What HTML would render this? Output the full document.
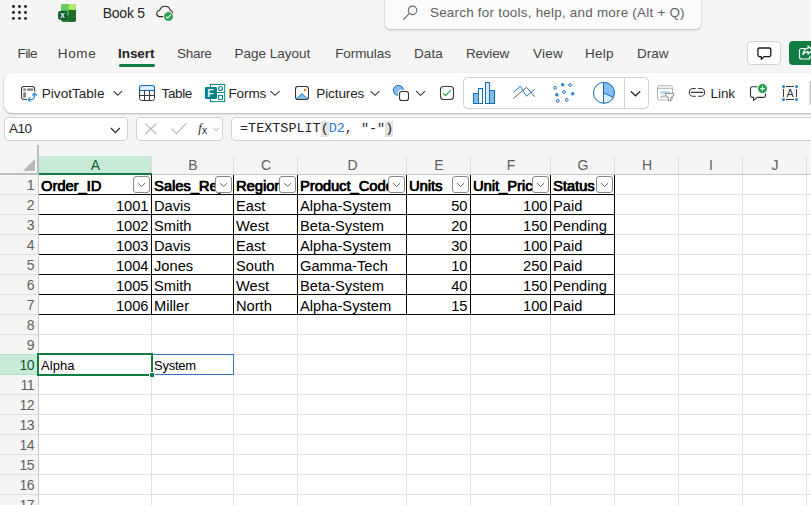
<!DOCTYPE html>
<html>
<head>
<meta charset="utf-8">
<title>Book 5</title>
<style>
html,body{margin:0;padding:0;}
body{width:811px;height:505px;overflow:hidden;background:#f5f5f5;font-family:"Liberation Sans",sans-serif;position:relative;color:#242424;}
.abs{position:absolute;}
.t{position:absolute;white-space:pre;line-height:1;}
.ui{font-size:13.5px;color:#424242;}
/* title */
#search{left:385px;top:-6px;width:316px;height:34.5px;background:#fbfbfb;border-radius:5px;box-shadow:0 1px 2px rgba(0,0,0,.22),0 0 2px rgba(0,0,0,.10);}
/* ribbon */
#ribbon{left:4px;top:73px;width:830px;height:40px;background:#fff;border-radius:8px;box-shadow:0 1px 2px rgba(0,0,0,.26),0 0 1px rgba(0,0,0,.14);}
.rb{font-size:13.5px;color:#242424;}
.fbox{position:absolute;top:117px;height:24px;background:#fff;border:1px solid #d1d1d1;border-radius:4px;box-sizing:border-box;}
/* grid */
#grid{left:0;top:145px;width:811px;height:360px;}
.cell{position:absolute;white-space:pre;font-size:14.67px;line-height:19px;height:18px;color:#000;overflow:hidden;}
.b{font-weight:400;-webkit-text-stroke:0.55px #000;text-shadow:0.35px 0 0 #000;}
.r{text-align:right;}
.rh{position:absolute;left:0;width:34px;letter-spacing:-0.5px;text-align:right;font-size:14px;margin-top:1px;line-height:19px;color:#616161;}
.ch{position:absolute;top:156px;height:17px;line-height:18px;text-align:center;font-size:14px;padding-left:0.5px;color:#616161;}
.fb{position:absolute;width:15px;height:15px;border:1px solid #8a8a8a;border-radius:3px;background:#fff;}
</style>
</head>
<body>

<!-- ===== title bar ===== -->
<svg class="abs" style="left:10px;top:3px" width="20" height="20" viewBox="10 3 20 20">
 <g fill="#1f1f1f">
  <circle cx="13.400" cy="6.500" r="1.450"/><circle cx="19.450" cy="6.500" r="1.450"/><circle cx="25.500" cy="6.500" r="1.450"/>
  <circle cx="13.400" cy="12.450" r="1.450"/><circle cx="19.450" cy="12.450" r="1.450"/><circle cx="25.500" cy="12.450" r="1.450"/>
  <circle cx="13.400" cy="18.400" r="1.450"/><circle cx="19.450" cy="18.400" r="1.450"/><circle cx="25.500" cy="18.400" r="1.450"/>
 </g>
</svg>

<svg class="abs" style="left:52px;top:0px" width="30" height="26" viewBox="52 0 30 26">
 <clipPath id="xc"><rect x="61" y="3.900" width="15.100" height="18" rx="2.700"/></clipPath>
 <g clip-path="url(#xc)">
  <rect x="61" y="3.900" width="15.100" height="18" fill="#1f7a2b"/>
  <rect x="68.900" y="9.900" width="7.200" height="12" fill="#236b28"/>
  <path d="M61 9.900H68.900V13.500A2.500 2.500 0 0 1 66.400 16H61Z" fill="#43ab49"/>
  <rect x="61" y="3.900" width="7.500" height="6.100" fill="#66cf5c"/>
  <rect x="68.400" y="3.900" width="7.700" height="6" fill="#b4e86e"/>
 </g>
 <rect x="58.100" y="11.100" width="8.800" height="8.700" rx="2" fill="#0f5b32"/>
 <text x="62.500" y="17.900" font-family="Liberation Sans, sans-serif" font-weight="700" font-size="6.800" text-anchor="middle" fill="#fff">X</text>
</svg>

<div class="t" style="left:102.70px;top:6px;font-size:14px;color:#242424;letter-spacing:-0.240px">Book 5</div>

<svg class="abs" style="left:150px;top:0px" width="30" height="26" viewBox="150 0 30 26">
 <path d="M163 16.600H160A3.100 3.100 0 0 1 159.700 10.400C160.300 7.900 162.500 6.200 165.100 6.200C167.800 6.200 169.700 8 170.300 10.300C171.400 10.500 172.300 11.400 172.700 12.700" fill="none" stroke="#2b2b2b" stroke-width="1.050" stroke-linecap="round"/>
 <circle cx="168.500" cy="16.600" r="5.100" fill="#f5f5f5"/>
 <circle cx="168.500" cy="16.600" r="4.500" fill="#2fa44f"/>
 <path d="M166.500 16.900L167.800 18.200L170.600 15" fill="none" stroke="#fff" stroke-width="1.100" stroke-linecap="round" stroke-linejoin="round"/>
</svg>

<div id="search" class="abs"></div>
<svg class="abs" style="left:400px;top:3px" width="20" height="20" viewBox="400 3 20 20">
 <circle cx="412.550" cy="10.350" r="4.250" fill="none" stroke="#616161" stroke-width="1.050"/>
 <path d="M409.500 13.400L403.500 19.300" stroke="#616161" stroke-width="1.100" stroke-linecap="round"/>
</svg>
<div class="t" style="left:430px;top:6px;font-size:13.4px;color:#616161;letter-spacing:0.245px">Search for tools, help, and more (Alt + Q)</div>

<!-- ===== tabs ===== -->
<div class="t ui" style="left:17.6px;top:46.6px;letter-spacing:-0.64px">File</div>
<div class="t ui" style="left:57.70px;top:46.6px;letter-spacing:0.700px">Home</div>
<div class="t ui" style="left:118.10px;top:46.6px;font-weight:700;color:#242424;letter-spacing:-0.080px">Insert</div>
<div class="abs" style="left:118.500px;top:64px;width:36px;height:3px;border-radius:1.500px;background:#107c41"></div>
<div class="t ui" style="left:177.10px;top:46.6px;letter-spacing:-0.310px">Share</div>
<div class="t ui" style="left:234.60px;top:46.6px;letter-spacing:-0.010px">Page Layout</div>
<div class="t ui" style="left:335.20px;top:46.6px;letter-spacing:-0.080px">Formulas</div>
<div class="t ui" style="left:414.00px;top:46.6px;letter-spacing:0.113px">Data</div>
<div class="t ui" style="left:465.90px;top:46.6px;letter-spacing:-0.184px">Review</div>
<div class="t ui" style="left:533px;top:46.6px;letter-spacing:0.267px">View</div>
<div class="t ui" style="left:585.00px;top:46.6px;letter-spacing:0.233px">Help</div>
<div class="t ui" style="left:636.90px;top:46.6px;letter-spacing:0.033px">Draw</div>

<div class="abs" style="left:747px;top:41px;width:34px;height:23.500px;box-sizing:border-box;background:#fff;border:1px solid #d1d1d1;border-radius:4px"></div>
<svg class="abs" style="left:750px;top:42px" width="28" height="22" viewBox="750 42 28 22">
 <path d="M759.500 48H769.200A1.600 1.600 0 0 1 770.800 49.600V55A1.600 1.600 0 0 1 769.200 56.600H764.300L761.300 59.300V56.600H759.500A1.600 1.600 0 0 1 757.900 55V49.600A1.600 1.600 0 0 1 759.500 48Z" fill="none" stroke="#1a1a1a" stroke-width="1.300" stroke-linejoin="round"/>
</svg>
<div class="abs" style="left:789px;top:41px;width:40px;height:23.500px;background:#107c41;border-radius:4px"></div>
<svg class="abs" style="left:797px;top:43.500px" width="16" height="17" viewBox="0 0 16 17">
 <path d="M8 4.500H4.500A2 2 0 0 0 2.500 6.500V13A2 2 0 0 0 4.500 15H11A2 2 0 0 0 13 13V12" fill="none" stroke="#fff" stroke-width="1.200" stroke-linecap="round"/>
 <path d="M11 2L15.500 6L11 10V7.600C8.500 7.600 7 8.500 6 10.500C6 7 8 4.800 11 4.500Z" fill="none" stroke="#fff" stroke-width="1.200" stroke-linejoin="round"/>
</svg>

<!-- ===== ribbon ===== -->
<div id="ribbon" class="abs"></div>
<!--RIBBON-START-->
<svg class="abs" style="left:0;top:73px" width="811" height="40" viewBox="0 73 811 40">
 <!-- pivot table icon -->
 <path d="M27 99.500H24A2.500 2.500 0 0 1 21.500 97V89A2.500 2.500 0 0 1 24 86.500H32.100A2.500 2.500 0 0 1 34.600 89V91.600" fill="none" stroke="#3a3a3a" stroke-width="1.100"/>
 <rect x="23.300" y="88.400" width="2.500" height="2.400" rx="0.400" fill="#7a7a7a"/>
 <rect x="27.200" y="88.400" width="5.800" height="2.400" rx="0.400" fill="#7a7a7a"/>
 <rect x="23.300" y="92.200" width="2.500" height="5.600" rx="0.400" fill="#7a7a7a"/>
 <path d="M28.300 99.600H30.800A3.700 3.700 0 0 0 34.500 95.900V93.400" fill="none" stroke="#1a86d9" stroke-width="1.150"/>
 <path d="M30.400 97.400L28.200 99.600L30.400 101.800M32.300 95.500L34.500 93.300L36.700 95.500" fill="none" stroke="#1a86d9" stroke-width="1.150"/>
 <!-- chevron pivot -->
 <path d="M113.600 91.200L117.800 95.300L122 91.200" fill="none" stroke="#333" stroke-width="1.100"/>
 <!-- table icon -->
 <path d="M139.500 90.500V87.500A2 2 0 0 1 141.500 85.500H152.500A2 2 0 0 1 154.500 87.500V90.500Z" fill="#deecf9" stroke="#0f6cbd" stroke-width="1.200"/>
 <path d="M139.500 90.500V98.300A2.200 2.200 0 0 0 141.700 100.500H152.300A2.200 2.200 0 0 0 154.500 98.300V90.500M139.500 95.500H154.500M144.500 90.500V100.500M149.500 90.500V100.500" fill="none" stroke="#3a3a3a" stroke-width="1"/>
 <!-- forms icon -->
 <rect x="210.400" y="84.400" width="14.300" height="17.200" fill="#fff" stroke="#038387" stroke-width="1"/>
 <path d="M216.500 92.500H224.500" stroke="#038387" stroke-width="1"/>
 <rect x="205" y="87" width="12" height="12" rx="1.300" fill="#038387"/>
 <circle cx="220.500" cy="88.500" r="2" fill="#fff" stroke="#038387" stroke-width="1.100"/>
 <rect x="218.500" y="95.400" width="4" height="4" fill="#fff" stroke="#038387" stroke-width="1"/>
 <!-- chevron forms -->
 <path d="M270.400 91.200L275 95.300L279.600 91.200" fill="none" stroke="#333" stroke-width="1.100"/>
 <!-- pictures icon -->
 <path d="M296.300 99.300L302 93.600L307.700 99.300Z" fill="#83beec"/><path d="M296.300 99.200L302 93.500L307.700 99.200" fill="none" stroke="#0f6cbd" stroke-width="1" stroke-linejoin="round"/>
 <rect x="295.500" y="86.500" width="13" height="13" rx="2.500" fill="none" stroke="#333" stroke-width="1.100"/>
 <rect x="304" y="89" width="2.100" height="2.100" fill="#e8740c"/>
 <!-- chevron pictures -->
 <path d="M370.600 91.200L375 95.300L379.400 91.200" fill="none" stroke="#333" stroke-width="1.100"/>
 <!-- shapes icon -->
 <circle cx="398.400" cy="90.400" r="5" fill="#83beec" stroke="#0f6cbd" stroke-width="1"/>
 <rect x="398" y="90" width="12" height="12" rx="3" fill="#fff"/>
 <rect x="399.500" y="91.500" width="9" height="9" rx="2.300" fill="#fff" stroke="#333" stroke-width="1.100"/>
 <path d="M416 91.200L420.500 95.300L425 91.200" fill="none" stroke="#333" stroke-width="1.100"/>
 <!-- checkbox icon -->
 <rect x="440.500" y="86.500" width="13" height="13" rx="3" fill="#fff" stroke="#3b3b3b" stroke-width="1.100"/>
 <path d="M443 93.300L445.500 95.500L450.900 90.200" fill="none" stroke="#21a04a" stroke-width="1.100"/>
 <!-- chart gallery box -->
 <rect x="463.500" y="77.500" width="185" height="31" rx="4" fill="#fff" stroke="#d1d1d1" stroke-width="1"/>
 <path d="M624.500 78V108" stroke="#d1d1d1" stroke-width="1"/>
 <!-- bar chart -->
 <rect x="473.500" y="93.500" width="5" height="10" fill="#83beec" stroke="#0f6cbd"/>
 <rect x="478.500" y="88.500" width="4" height="15" fill="#fff" stroke="#0f6cbd"/>
 <rect x="485.500" y="82.500" width="4" height="21" fill="#deecf9" stroke="#0f6cbd"/>
 <rect x="489.500" y="90.500" width="5" height="13" fill="#83beec" stroke="#0f6cbd"/>
 <!-- line chart -->
 <path d="M513.400 98.500L526.500 87.300L534.600 96.700" fill="none" stroke="#616161" stroke-width="1"/>
 <path d="M513.400 92.200L520.300 86.300L526.500 96.200L534.600 89.300" fill="none" stroke="#1e7fd0" stroke-width="1"/>
 <!-- scatter -->
 <g fill="#1e88d8"><circle cx="562.700" cy="84.700" r="1.700"/><circle cx="556.800" cy="94.700" r="1.700"/><circle cx="572.700" cy="93.700" r="1.700"/></g>
 <g fill="#fff" stroke="#0f6cbd" stroke-width="0.900"><circle cx="555.100" cy="87.800" r="1.400"/><circle cx="570.100" cy="85" r="1.400"/><circle cx="564" cy="92" r="1.400"/><circle cx="557.800" cy="100.900" r="1.400"/><circle cx="566.800" cy="99.800" r="1.400"/></g>
 <!-- pie -->
 <circle cx="604" cy="92.800" r="10.500" fill="#fff"/>
 <path d="M603.500 92.800V82.300A10.500 10.500 0 0 1 613.400 97.500Z" fill="#83beec"/>
 <path d="M603.500 92.800L613.400 97.500A10.500 10.500 0 0 1 603.500 103.300Z" fill="#deecf9"/>
 <circle cx="604" cy="92.800" r="10.500" fill="none" stroke="#0f6cbd" stroke-width="1"/>
 <path d="M603.500 82.300V103.300M603.500 92.800L613.400 97.500" fill="none" stroke="#0f6cbd" stroke-width="1"/>
 <!-- gallery chevron -->
 <path d="M630.800 91.200L635.500 95.800L640.200 91.200" fill="none" stroke="#242424" stroke-width="1.200"/>
 <!-- slicer (disabled) -->
 <rect x="657.500" y="85.700" width="15" height="14.300" rx="2" fill="#fff" stroke="#b0b0b0" stroke-width="1"/>
 <path d="M657.500 88.300H672.500" stroke="#b0b0b0" stroke-width="1"/>
 <rect x="660.500" y="91.300" width="9.500" height="2.400" fill="#a9d3f2"/>
 <rect x="660.500" y="95.500" width="5" height="2.200" fill="#c4c4c4"/>
 <path d="M665.500 93.500H673.700V95.200L670.800 98V100.800H668.400V98L665.500 95.200Z" fill="#fff" stroke="#969696" stroke-width="1.100" stroke-linejoin="round"/>
 <!-- link icon -->
 <path d="M695.400 88.500H693.200A3.900 3.900 0 0 0 693.200 96.300H695.400M698.600 88.500H700.800A3.900 3.900 0 0 1 700.800 96.300H698.600M691.300 92.400H702.700" fill="none" stroke="#3a3a3a" stroke-width="1.100" stroke-linecap="round"/>
 <!-- new comment icon -->
 <path d="M757.500 86.700H752.300A1.800 1.800 0 0 0 750.500 88.500V95.600A1.800 1.800 0 0 0 752.300 97.400H753.600V100.400L757.300 97.400H763.700A1.800 1.800 0 0 0 765.500 95.600V93.500" fill="none" stroke="#333" stroke-width="1.100" stroke-linejoin="round"/>
 <circle cx="762.500" cy="88.600" r="4.500" fill="#21a04a"/>
 <path d="M760.200 88.600H764.800M762.500 86.300V90.900" stroke="#fff" stroke-width="1.100"/>
 <!-- text box icon -->
 <path d="M786 86.500H794M786 99.500H794M783.500 89V97M796.500 89V97" stroke="#3a3a3a" stroke-width="1"/>
 <g fill="#1e88d8"><circle cx="783.500" cy="86.500" r="1.500"/><circle cx="796.500" cy="86.500" r="1.500"/><circle cx="783.500" cy="99.500" r="1.500"/><circle cx="796.500" cy="99.500" r="1.500"/></g>
 <text x="790" y="96.800" font-family="Liberation Sans, sans-serif" font-size="10.800" text-anchor="middle" fill="#333">A</text>
 <text x="210.450" y="96.900" font-family="Liberation Sans, sans-serif" font-size="10.500" font-weight="700" text-anchor="middle" fill="#eaf6f6">F</text>
 <rect x="809.500" y="81" width="2" height="23.500" fill="#c6c6c6"/>
</svg>
<div class="t rb" style="left:41.80px;top:86.5px;letter-spacing:0.037px">PivotTable</div>
<div class="t rb" style="left:161.5px;top:86.5px;letter-spacing:-0.36px">Table</div>
<div class="t rb" style="left:228.50px;top:86.5px;letter-spacing:-0.125px">Forms</div>
<div class="t rb" style="left:316.30px;top:86.5px;letter-spacing:-0.103px">Pictures</div>
<div class="t rb" style="left:710.60px;top:86.5px;letter-spacing:-0.083px">Link</div>
<!--RIBBON-END-->

<!-- ===== formula bar ===== -->
<div class="fbox" style="left:4px;width:124px"></div>
<div class="fbox" style="left:136px;width:87px"></div>
<div class="fbox" style="left:231px;width:600px"></div>
<div class="t" style="left:8.9px;top:122.400px;font-size:13.500px;color:#242424;letter-spacing:-0.45px">A10</div>
<svg class="abs" style="left:100px;top:117px" width="130" height="24" viewBox="100 117 130 24">
 <path d="M111 128L115.400 132.600L119.800 128" fill="none" stroke="#242424" stroke-width="1.150"/>
 <path d="M145.200 123.400L156.500 134.200M156.500 123.400L145.200 134.200" fill="none" stroke="#b8b8b8" stroke-width="1.200"/>
 <path d="M171.500 128.600L176.400 133.600L186.200 123.300" fill="none" stroke="#b8b8b8" stroke-width="1.200"/>
 <path d="M213.600 128L216.200 130.500L218.800 128" fill="none" stroke="#9e9e9e" stroke-width="1"/>
 <text x="198.300" y="131.500" font-family="Liberation Serif, serif" font-style="italic" font-size="12.500" fill="#2b2b2b">f</text>
 <text x="201.900" y="134" font-family="Liberation Sans, sans-serif" font-size="10.300" fill="#2b2b2b">x</text>
</svg>
<div class="abs" style="left:320.500px;top:121px;width:8px;height:16px;background:#e3e3e3"></div>
<div class="abs" style="left:385px;top:121px;width:8px;height:16px;background:#e3e3e3"></div>
<div class="t" style="left:240px;top:122px;font-family:'Liberation Mono',monospace;font-size:13.450px;color:#242424">=TEXTSPLIT(<span style="color:#2b7cd3">D2</span>, "-")</div>

<!-- ===== grid ===== -->
<!--GRID-START-->
<div class="abs" style="left:39px;top:175px;width:772px;height:330px;background:#fff"></div>
<div class="abs" style="left:39px;top:156px;width:113px;height:17px;background:#caead8"></div>
<svg class="abs" style="left:0;top:145px" width="811" height="360" viewBox="0 145 811 360" shape-rendering="crispEdges">
<rect x="39" y="194" width="772" height="1" fill="#e1e1e1"/>
<rect x="39" y="214" width="772" height="1" fill="#e1e1e1"/>
<rect x="39" y="234" width="772" height="1" fill="#e1e1e1"/>
<rect x="39" y="254" width="772" height="1" fill="#e1e1e1"/>
<rect x="39" y="274" width="772" height="1" fill="#e1e1e1"/>
<rect x="39" y="294" width="772" height="1" fill="#e1e1e1"/>
<rect x="39" y="314" width="772" height="1" fill="#e1e1e1"/>
<rect x="39" y="334" width="772" height="1" fill="#e1e1e1"/>
<rect x="39" y="354" width="772" height="1" fill="#e1e1e1"/>
<rect x="39" y="374" width="772" height="1" fill="#e1e1e1"/>
<rect x="39" y="394" width="772" height="1" fill="#e1e1e1"/>
<rect x="39" y="414" width="772" height="1" fill="#e1e1e1"/>
<rect x="39" y="434" width="772" height="1" fill="#e1e1e1"/>
<rect x="39" y="454" width="772" height="1" fill="#e1e1e1"/>
<rect x="39" y="474" width="772" height="1" fill="#e1e1e1"/>
<rect x="39" y="494" width="772" height="1" fill="#e1e1e1"/>
<rect x="39" y="514" width="772" height="1" fill="#e1e1e1"/>
<rect x="151" y="175" width="1" height="330" fill="#e1e1e1"/>
<rect x="233" y="175" width="1" height="330" fill="#e1e1e1"/>
<rect x="297" y="175" width="1" height="330" fill="#e1e1e1"/>
<rect x="406" y="175" width="1" height="330" fill="#e1e1e1"/>
<rect x="470" y="175" width="1" height="330" fill="#e1e1e1"/>
<rect x="550" y="175" width="1" height="330" fill="#e1e1e1"/>
<rect x="614" y="175" width="1" height="330" fill="#e1e1e1"/>
<rect x="678" y="175" width="1" height="330" fill="#e1e1e1"/>
<rect x="742" y="175" width="1" height="330" fill="#e1e1e1"/>
<rect x="806" y="175" width="1" height="330" fill="#e1e1e1"/>
<rect x="0" y="194" width="38" height="1" fill="#dddddd"/>
<rect x="0" y="214" width="38" height="1" fill="#dddddd"/>
<rect x="0" y="234" width="38" height="1" fill="#dddddd"/>
<rect x="0" y="254" width="38" height="1" fill="#dddddd"/>
<rect x="0" y="274" width="38" height="1" fill="#dddddd"/>
<rect x="0" y="294" width="38" height="1" fill="#dddddd"/>
<rect x="0" y="314" width="38" height="1" fill="#dddddd"/>
<rect x="0" y="334" width="38" height="1" fill="#dddddd"/>
<rect x="0" y="354" width="38" height="1" fill="#dddddd"/>
<rect x="0" y="374" width="38" height="1" fill="#dddddd"/>
<rect x="0" y="394" width="38" height="1" fill="#dddddd"/>
<rect x="0" y="414" width="38" height="1" fill="#dddddd"/>
<rect x="0" y="434" width="38" height="1" fill="#dddddd"/>
<rect x="0" y="454" width="38" height="1" fill="#dddddd"/>
<rect x="0" y="474" width="38" height="1" fill="#dddddd"/>
<rect x="0" y="494" width="38" height="1" fill="#dddddd"/>
<rect x="0" y="514" width="38" height="1" fill="#dddddd"/>
<rect x="151" y="156" width="1" height="18" fill="#dddddd"/>
<rect x="233" y="156" width="1" height="18" fill="#dddddd"/>
<rect x="297" y="156" width="1" height="18" fill="#dddddd"/>
<rect x="406" y="156" width="1" height="18" fill="#dddddd"/>
<rect x="470" y="156" width="1" height="18" fill="#dddddd"/>
<rect x="550" y="156" width="1" height="18" fill="#dddddd"/>
<rect x="614" y="156" width="1" height="18" fill="#dddddd"/>
<rect x="678" y="156" width="1" height="18" fill="#dddddd"/>
<rect x="742" y="156" width="1" height="18" fill="#dddddd"/>
<rect x="806" y="156" width="1" height="18" fill="#dddddd"/>
<rect x="39" y="174" width="772" height="1" fill="#c6c6c6"/>
<rect x="0" y="173" width="39" height="2" fill="#bdbdbd"/>
<rect x="37" y="145" width="2" height="30" fill="#bdbdbd"/>
<rect x="38" y="175" width="1" height="330" fill="#c8c8c8"/>
<rect x="39" y="173" width="113" height="2" fill="#107c41"/>
<rect x="0" y="354" width="37" height="21" fill="#caead8"/>
<rect x="0" y="354" width="37" height="1" fill="#b4dfc6"/>
<rect x="0" y="374" width="37" height="1" fill="#b4dfc6"/>
<rect x="37" y="355" width="2" height="19" fill="#107c41"/>
<path d="M35 159V171H23Z" fill="#b9b9b9" shape-rendering="auto"/>
<rect x="39" y="194" width="576" height="1" fill="#000"/>
<rect x="39" y="214" width="576" height="1" fill="#000"/>
<rect x="39" y="234" width="576" height="1" fill="#000"/>
<rect x="39" y="254" width="576" height="1" fill="#000"/>
<rect x="39" y="274" width="576" height="1" fill="#000"/>
<rect x="39" y="294" width="576" height="1" fill="#000"/>
<rect x="39" y="314" width="576" height="1" fill="#000"/>
<rect x="151" y="175" width="1" height="140" fill="#000"/>
<rect x="233" y="175" width="1" height="140" fill="#000"/>
<rect x="297" y="175" width="1" height="140" fill="#000"/>
<rect x="406" y="175" width="1" height="140" fill="#000"/>
<rect x="470" y="175" width="1" height="140" fill="#000"/>
<rect x="550" y="175" width="1" height="140" fill="#000"/>
<rect x="614" y="175" width="1" height="140" fill="#000"/>
<rect x="152.5" y="354.5" width="81" height="20" fill="none" stroke="#3f6fc4" stroke-width="1"/>
<rect x="38" y="354" width="114" height="21" fill="none" stroke="#107c41" stroke-width="2"/>
<rect x="149" y="372" width="6" height="6" fill="#fff"/>
<rect x="150" y="373" width="4" height="4" fill="#107c41"/>
</svg>
<div class="ch" style="left:39px;width:112px;color:#0e5c2f">A</div>
<div class="ch" style="left:152px;width:81px;color:#616161">B</div>
<div class="ch" style="left:234px;width:63px;color:#616161">C</div>
<div class="ch" style="left:298px;width:108px;color:#616161">D</div>
<div class="ch" style="left:407px;width:63px;color:#616161">E</div>
<div class="ch" style="left:471px;width:79px;color:#616161">F</div>
<div class="ch" style="left:551px;width:63px;color:#616161">G</div>
<div class="ch" style="left:615px;width:63px;color:#616161">H</div>
<div class="ch" style="left:679px;width:63px;color:#616161">I</div>
<div class="ch" style="left:743px;width:63px;color:#616161">J</div>
<div class="rh" style="top:175px;color:#616161">1</div>
<div class="rh" style="top:195px;color:#616161">2</div>
<div class="rh" style="top:215px;color:#616161">3</div>
<div class="rh" style="top:235px;color:#616161">4</div>
<div class="rh" style="top:255px;color:#616161">5</div>
<div class="rh" style="top:275px;color:#616161">6</div>
<div class="rh" style="top:295px;color:#616161">7</div>
<div class="rh" style="top:315px;color:#616161">8</div>
<div class="rh" style="top:335px;color:#616161">9</div>
<div class="rh" style="top:355px;color:#0e5c2f">10</div>
<div class="rh" style="top:375px;color:#616161">11</div>
<div class="rh" style="top:395px;color:#616161">12</div>
<div class="rh" style="top:415px;color:#616161">13</div>
<div class="rh" style="top:435px;color:#616161">14</div>
<div class="rh" style="top:455px;color:#616161">15</div>
<div class="rh" style="top:475px;color:#616161">16</div>
<div class="rh" style="top:495px;color:#616161">17</div>
<div class="cell b" style="left:41px;top:177px;width:110px;height:18px">Order_ID</div>
<div class="fb" style="left:133px;top:176px"></div>
<svg class="abs" style="left:137px;top:182px" width="9" height="6" viewBox="0 0 9 6"><path d="M1 1.200L4.500 4.500L8 1.200" fill="none" stroke="#666" stroke-width="1"/></svg>
<div class="cell b" style="left:154px;top:177px;width:79px;height:18px">Sales_Rep</div>
<div class="fb" style="left:215px;top:176px"></div>
<svg class="abs" style="left:219px;top:182px" width="9" height="6" viewBox="0 0 9 6"><path d="M1 1.200L4.500 4.500L8 1.200" fill="none" stroke="#666" stroke-width="1"/></svg>
<div class="cell b" style="left:236px;top:177px;width:61px;height:18px">Region</div>
<div class="fb" style="left:279px;top:176px"></div>
<svg class="abs" style="left:283px;top:182px" width="9" height="6" viewBox="0 0 9 6"><path d="M1 1.200L4.500 4.500L8 1.200" fill="none" stroke="#666" stroke-width="1"/></svg>
<div class="cell b" style="left:300px;top:177px;width:106px;height:18px">Product_Code</div>
<div class="fb" style="left:388px;top:176px"></div>
<svg class="abs" style="left:392px;top:182px" width="9" height="6" viewBox="0 0 9 6"><path d="M1 1.200L4.500 4.500L8 1.200" fill="none" stroke="#666" stroke-width="1"/></svg>
<div class="cell b" style="left:409px;top:177px;width:61px;height:18px">Units</div>
<div class="fb" style="left:452px;top:176px"></div>
<svg class="abs" style="left:456px;top:182px" width="9" height="6" viewBox="0 0 9 6"><path d="M1 1.200L4.500 4.500L8 1.200" fill="none" stroke="#666" stroke-width="1"/></svg>
<div class="cell b" style="left:473px;top:177px;width:77px;height:18px">Unit_Price</div>
<div class="fb" style="left:532px;top:176px"></div>
<svg class="abs" style="left:536px;top:182px" width="9" height="6" viewBox="0 0 9 6"><path d="M1 1.200L4.500 4.500L8 1.200" fill="none" stroke="#666" stroke-width="1"/></svg>
<div class="cell b" style="left:553px;top:177px;width:61px;height:18px">Status</div>
<div class="fb" style="left:596px;top:176px"></div>
<svg class="abs" style="left:600px;top:182px" width="9" height="6" viewBox="0 0 9 6"><path d="M1 1.200L4.500 4.500L8 1.200" fill="none" stroke="#666" stroke-width="1"/></svg>
<div class="cell r" style="left:39px;top:197px;width:109.5px">1001</div>
<div class="cell" style="left:154px;top:197px;width:79px">Davis</div>
<div class="cell" style="left:236px;top:197px;width:61px">East</div>
<div class="cell" style="left:300px;top:197px;width:106px">Alpha-System</div>
<div class="cell r" style="left:407px;top:197px;width:60.5px">50</div>
<div class="cell r" style="left:471px;top:197px;width:76.5px">100</div>
<div class="cell" style="left:553px;top:197px;width:61px">Paid</div>
<div class="cell r" style="left:39px;top:217px;width:109.5px">1002</div>
<div class="cell" style="left:154px;top:217px;width:79px">Smith</div>
<div class="cell" style="left:236px;top:217px;width:61px">West</div>
<div class="cell" style="left:300px;top:217px;width:106px">Beta-System</div>
<div class="cell r" style="left:407px;top:217px;width:60.5px">20</div>
<div class="cell r" style="left:471px;top:217px;width:76.5px">150</div>
<div class="cell" style="left:553px;top:217px;width:61px">Pending</div>
<div class="cell r" style="left:39px;top:237px;width:109.5px">1003</div>
<div class="cell" style="left:154px;top:237px;width:79px">Davis</div>
<div class="cell" style="left:236px;top:237px;width:61px">East</div>
<div class="cell" style="left:300px;top:237px;width:106px">Alpha-System</div>
<div class="cell r" style="left:407px;top:237px;width:60.5px">30</div>
<div class="cell r" style="left:471px;top:237px;width:76.5px">100</div>
<div class="cell" style="left:553px;top:237px;width:61px">Paid</div>
<div class="cell r" style="left:39px;top:257px;width:109.5px">1004</div>
<div class="cell" style="left:154px;top:257px;width:79px">Jones</div>
<div class="cell" style="left:236px;top:257px;width:61px">South</div>
<div class="cell" style="left:300px;top:257px;width:106px">Gamma-Tech</div>
<div class="cell r" style="left:407px;top:257px;width:60.5px">10</div>
<div class="cell r" style="left:471px;top:257px;width:76.5px">250</div>
<div class="cell" style="left:553px;top:257px;width:61px">Paid</div>
<div class="cell r" style="left:39px;top:277px;width:109.5px">1005</div>
<div class="cell" style="left:154px;top:277px;width:79px">Smith</div>
<div class="cell" style="left:236px;top:277px;width:61px">West</div>
<div class="cell" style="left:300px;top:277px;width:106px">Beta-System</div>
<div class="cell r" style="left:407px;top:277px;width:60.5px">40</div>
<div class="cell r" style="left:471px;top:277px;width:76.5px">150</div>
<div class="cell" style="left:553px;top:277px;width:61px">Pending</div>
<div class="cell r" style="left:39px;top:297px;width:109.5px">1006</div>
<div class="cell" style="left:154px;top:297px;width:79px">Miller</div>
<div class="cell" style="left:236px;top:297px;width:61px">North</div>
<div class="cell" style="left:300px;top:297px;width:106px">Alpha-System</div>
<div class="cell r" style="left:407px;top:297px;width:60.5px">15</div>
<div class="cell r" style="left:471px;top:297px;width:76.5px">100</div>
<div class="cell" style="left:553px;top:297px;width:61px">Paid</div>
<div class="cell" style="left:41px;top:356px;width:108px;font-size:13px;letter-spacing:0.05px">Alpha</div>
<div class="cell" style="left:154px;top:356px;width:78px;font-size:13px;letter-spacing:-0.25px">System</div>
<!--GRID-END-->

</body>
</html>
